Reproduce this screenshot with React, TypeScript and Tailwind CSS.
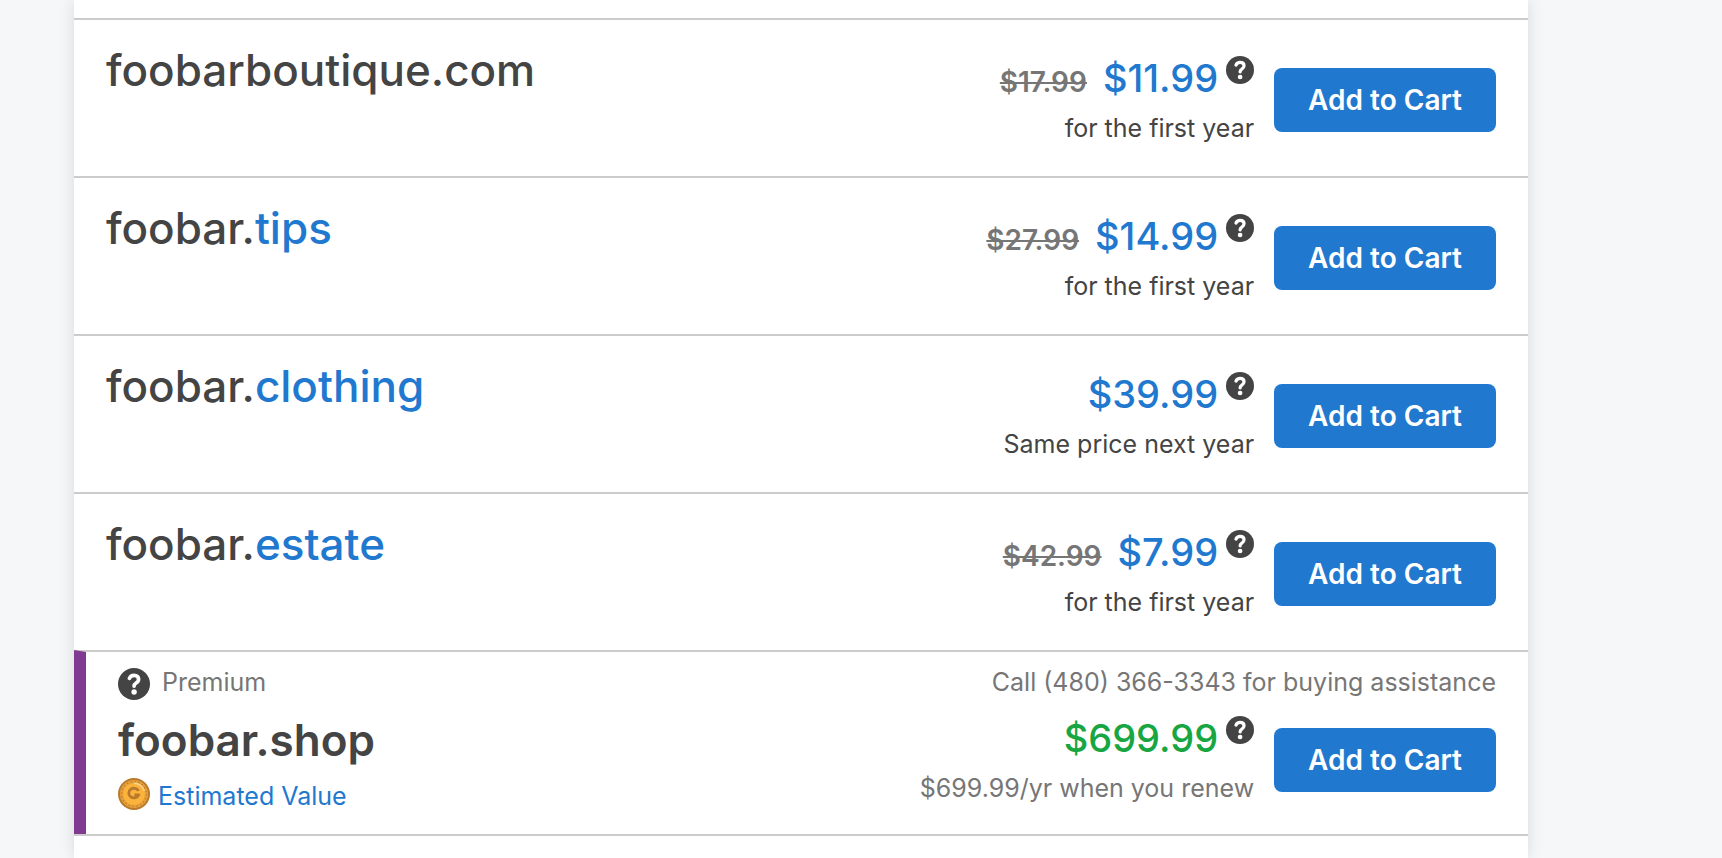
type Listing = {
  name: string;
  tld?: string;
  oldPrice?: string;
  price: string;
  note: string;
};

const listings: Listing[] = [
  { name: "foobarboutique.com", oldPrice: "$17.99", price: "$11.99", note: "for the first year" },
  { name: "foobar.", tld: "tips", oldPrice: "$27.99", price: "$14.99", note: "for the first year" },
  { name: "foobar.", tld: "clothing", price: "$39.99", note: "Same price next year" },
  { name: "foobar.", tld: "estate", oldPrice: "$42.99", price: "$7.99", note: "for the first year" },
];

function HelpIcon({ className }: { className: string }) {
  return (
    <svg viewBox="0 0 32 32" className={className} aria-hidden="true">
      <circle cx="16" cy="16" r="16" fill="#444" />
      <path
        d="M11.4 10.4C12.2 8.4 13.9 7.3 16.1 7.3C18.8 7.3 20.6 8.9 20.6 11.2C20.6 13.2 19.4 14.2 18.1 15C16.7 15.9 16.2 16.6 16.1 18.2"
        fill="none"
        stroke="#fff"
        strokeWidth="3.7"
        strokeLinecap="round"
        strokeLinejoin="round"
      />
      <circle cx="16.1" cy="24" r="2.7" fill="#fff" />
    </svg>
  );
}

function HelpButton({ label, className }: { label: string; className: string }) {
  return (
    <button type="button" aria-label={label} className="block shrink-0 cursor-pointer">
      <HelpIcon className={className} />
    </button>
  );
}

function CoinIcon() {
  return (
    <svg viewBox="0 0 32 32" className="size-8 shrink-0" aria-hidden="true">
      <circle cx="16" cy="16" r="16" fill="#b97a2b" />
      <circle cx="16" cy="16" r="14" fill="#e5a03a" />
      <circle cx="16" cy="16" r="10.8" fill="#fbb33c" />
      <circle cx="16" cy="16" r="12.4" fill="none" stroke="#b97a2b" strokeWidth="1.1" strokeDasharray="1.4 2.5" />
      <path d="M16 5.2A10.8 10.8 0 0 1 26.4 13" fill="none" stroke="#fdd58a" strokeWidth="1.4" />
      <path
        d="M20.6 12.9A5.2 4.8 0 1 0 20.8 16.8H16.4"
        fill="none"
        stroke="#b97a2b"
        strokeWidth="2.8"
        strokeLinejoin="round"
      />
    </svg>
  );
}

function CartButton() {
  return (
    <button
      type="button"
      className="h-16 shrink-0 cursor-pointer rounded-lg bg-[#2178cf] px-[34px] text-[28px] leading-8 font-semibold text-white"
    >
      Add to Cart
    </button>
  );
}

function Price({ oldPrice, price, note, premium }: { oldPrice?: string; price: string; note: string; premium?: boolean }) {
  return (
    <div className="flex flex-col items-end">
      <div className="flex h-14 items-start">
        <div className="flex items-baseline gap-4 leading-[52px]">
          {oldPrice && <s className="text-[28px] font-semibold text-[#767676] decoration-2">{oldPrice}</s>}
          <span className={premium ? "text-[38px] font-medium text-[#17a641]" : "text-[38px] font-medium text-[#2178cf]"}>
            {price}
          </span>
        </div>
        <div className="pt-1 pl-2">
          <HelpButton label="About this price" className="size-7" />
        </div>
      </div>
      <p className={premium ? "text-[25px] leading-10 text-[#767676]" : "text-[25px] leading-10 text-[#444]"}>{note}</p>
    </div>
  );
}

export default function App() {
  return (
    <div className="flex min-h-screen bg-[#f5f7f9] font-['Inter',sans-serif] text-[#444]">
      <aside className="h-[510px] w-0 shrink-0 shadow-[0_0_16px_rgba(0,0,0,0.12)]" />
      <main className="mr-[194px] ml-[74px] flex grow flex-col bg-white pt-[18px] shadow-[0_0_16px_rgba(0,0,0,0.12)]">
        {listings.map((item) => (
          <section
            key={item.name + (item.tld ?? "")}
            className="flex h-[158px] justify-between border-t-2 border-[#ccc] pr-8 pl-8"
          >
            <h2 className="pt-6 text-[44px] leading-[52px] font-medium">
              {item.name}
              {item.tld && <span className="text-[#2178cf]">{item.tld}</span>}
            </h2>
            <div className="flex gap-5">
              <div className="pt-8">
                <Price oldPrice={item.oldPrice} price={item.price} note={item.note} />
              </div>
              <div className="pt-12">
                <CartButton />
              </div>
            </div>
          </section>
        ))}
        <section className="flex h-[184px] justify-between border-t-2 border-l-12 border-t-[#ccc] border-l-[#803a91] pr-8 pl-8">
          <div className="flex flex-col pt-3">
            <div className="flex items-start gap-3 pt-1">
              <HelpButton label="About premium domains" className="size-8" />
              <span className="text-[25px] leading-7 text-[#767676]">Premium</span>
            </div>
            <h2 className="pt-3 text-[44px] leading-[56px] font-semibold">foobar.shop</h2>
            <a href="#estimate" className="flex items-start gap-2 pt-2.5 text-[25px] leading-9 text-[#2178cf]">
              <CoinIcon />
              Estimated Value
            </a>
          </div>
          <div className="flex flex-col items-end pt-3">
            <p className="text-[25px] leading-9 text-[#767676]">Call (480) 366-3343 for buying assistance</p>
            <div className="flex gap-5 pt-3">
              <Price price="$699.99" note="$699.99/yr when you renew" premium />
              <div className="pt-4">
                <CartButton />
              </div>
            </div>
          </div>
        </section>
        <div className="grow border-t-2 border-[#ccc]" />
      </main>
    </div>
  );
}
